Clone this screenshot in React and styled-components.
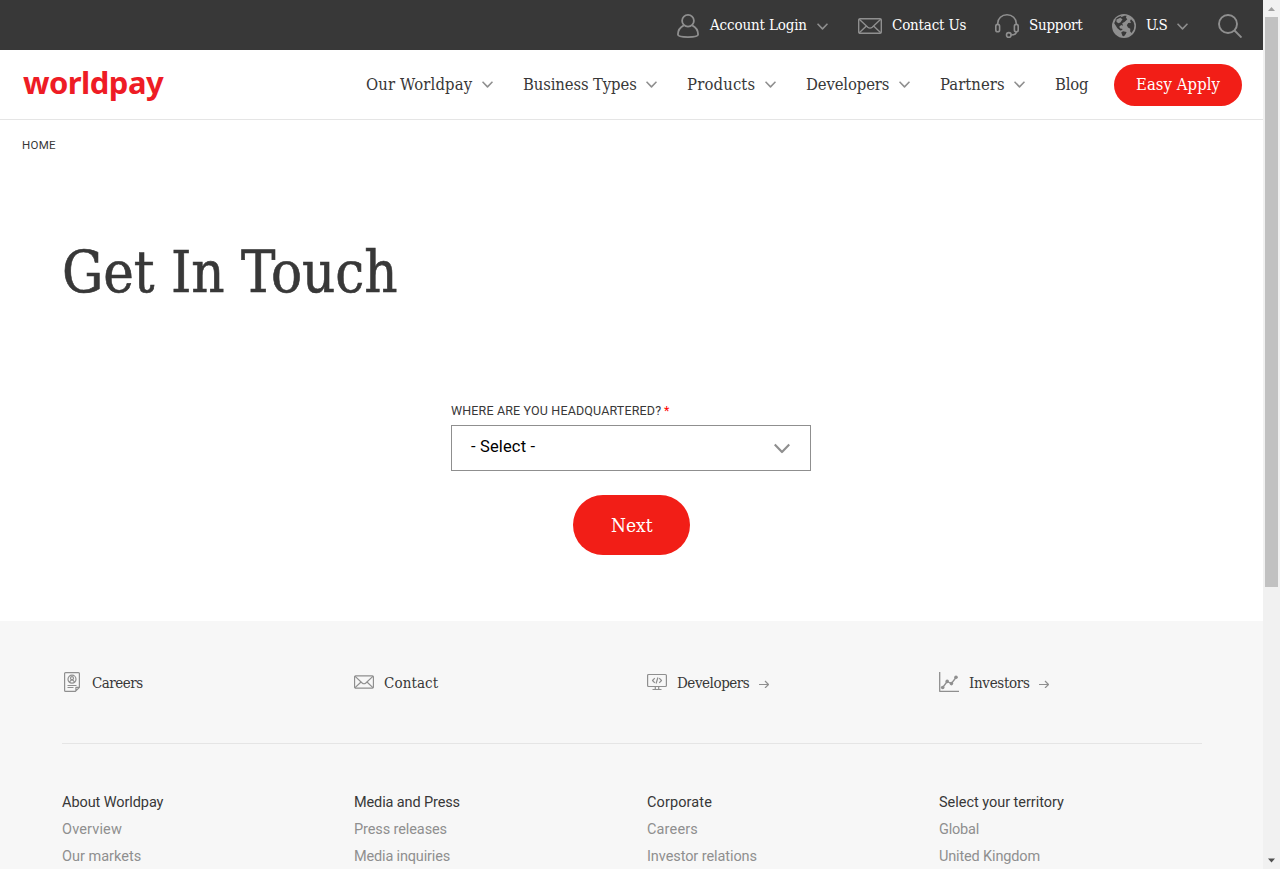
import React from "react";
import styled, { createGlobalStyle } from "styled-components";

const serif = '"DejaVu Serif Condensed", "DejaVu Serif", serif';
const sans = 'Roboto, "Liberation Sans", sans-serif';

const GlobalStyle = createGlobalStyle`
  * { box-sizing: border-box; }
  body { margin: 0; background: #fff; overflow: hidden; }
`;

const Page = styled.div`
  display: grid;
  grid-template-columns: minmax(0, 1fr) 17px;
  width: 100%;
  height: 869px;
  overflow: hidden;
`;
const Content = styled.div`
  height: 869px;
  overflow: hidden;
  color: #383838;
  font-family: ${sans};
`;
const Label = styled.span`
  display: block;
  flex: none;
  width: ${(p) => p.$w}px;
  letter-spacing: ${(p) => p.$ls || 0}px;
  white-space: nowrap;
`;
const Icon = styled.svg`
  display: block;
  flex: none;
  fill: none;
  stroke: #8f8f8f;
  stroke-linejoin: round;
`;
const TopBar = styled.div`
  display: flex;
  justify-content: flex-end;
  gap: 29px;
  height: 50px;
  padding-right: 21px;
  background: #383838;
  color: #fff;
  font: 15px/50px ${serif};
`;
const TopItem = styled.div`
  display: flex;
  align-items: center;
  gap: 10px;
  height: 52px;
  margin-left: ${(p) => p.$ml || 0}px;
  ${Label} { margin-top: -3px; }
`;
const Header = styled.header`
  display: flex;
  align-items: center;
  height: 70px;
  padding: 0 21px 0 23px;
  border-bottom: 1px solid #e5e5e5;
`;
const Logo = styled.div`
  margin-right: auto;
  margin-top: -6px;
  color: #ee1c25;
  font: 700 31px/40px "Noto Sans", sans-serif;
`;
const Nav = styled.nav`
  display: flex;
  gap: 30px;
  font: 16.5px/30px ${serif};
`;
const NavItem = styled.div`
  display: flex;
  align-items: center;
  gap: 10px;
`;
const Pill = styled.button`
  display: flex;
  align-items: center;
  justify-content: center;
  width: ${(p) => p.$w}px;
  height: ${(p) => p.$h}px;
  margin: ${(p) => p.$m};
  padding: 0;
  border: 0;
  border-radius: ${(p) => p.$h / 2}px;
  background: #f21e17;
  color: #fff;
  font: ${(p) => p.$size}px/30px ${serif};
  text-align: left;
`;
const Breadcrumb = styled.div`
  padding: 15px 0 0 22px;
  height: 45px;
  font-size: 11.5px;
  line-height: 20px;
`;
const Title = styled.h1`
  margin: 0;
  padding: 66px 0 0 62px;
  height: 238px;
  font: 400 57.5px/84px ${serif};
  -webkit-text-stroke: 0.6px #383838;
`;
const Form = styled.form`
  width: 360px;
  height: 218px;
  margin-left: 451px;
`;
const Question = styled.label`
  display: flex;
  gap: 3px;
  height: 22px;
  font-size: 12.5px;
  line-height: 16px;
`;
const Required = styled.span`
  color: #f00;
`;
const Select = styled.div`
  display: flex;
  align-items: center;
  justify-content: space-between;
  height: 46px;
  padding: 0 20px 0 19px;
  border: 1px solid #8f8f8f;
  color: #000;
  font-size: 16.5px;
  line-height: 20px;
  ${Label} { margin-top: -2px; }
`;
const Footer = styled.footer`
  height: 248px;
  padding: 0 61px 0 62px;
  background: #f7f7f7;
`;
const Columns = styled.div`
  display: grid;
  grid-template-columns: 262px 263px 262px 262px;
  gap: 30px;
`;
const Shortcuts = styled(Columns)`
  height: 123px;
  padding-top: 46px;
  border-bottom: 1px solid #e5e5e5;
  font: 15px/30px ${serif};
`;
const Shortcut = styled.div`
  display: flex;
  align-items: center;
  gap: 10px;
  height: 30px;
  ${Label} { margin-top: 2px; }
`;
const Links = styled(Columns)`
  padding-top: 45px;
  font-size: 14.5px;
  line-height: 27px;
`;
const LinkRow = styled.div`
  color: ${(p) => (p.$heading ? "#383838" : "#8f8f8f")};
`;
const Scrollbar = styled.div`
  display: flex;
  flex-direction: column;
  align-items: center;
  height: 869px;
  background: #f1f1f1;
`;
const Thumb = styled.div`
  width: 13px;
  height: 570px;
  margin-bottom: auto;
  background: #c1c1c1;
`;

const Chevron = ({ w = 11, h = 7, sw = 1.6 }) => (
  <Icon width={w} height={h} viewBox="0 0 11 7" strokeWidth={sw} strokeLinejoin="miter">
    <path d="M.5 .7 5.5 5.9 10.5 .7" />
  </Icon>
);
const UserIcon = () => (
  <Icon width="23" height="24" viewBox="0 0 23 24" strokeWidth="1.8">
    <circle cx="11" cy="6.8" r="5.9" />
    <path d="M6.8 11.4C3 13.4 .9 17 .9 20.6 .9 22.5 5 23.1 11 23.1S21.1 22.5 21.1 20.6C21.1 17 19 13.4 15.2 11.4" />
  </Icon>
);
const MailIcon = ({ w = 24, h = 16 }) => (
  <Icon width={w} height={h} viewBox="0 0 24 16" strokeWidth="1.4">
    <rect x=".7" y=".7" width="22.6" height="14.6" rx="1.4" />
    <path d="M1 1 9.8 9.2Q12 11 14.2 9.2L23 1M1 15 8.4 8M23 15 15.6 8" />
  </Icon>
);
const HeadsetIcon = () => (
  <Icon width="24" height="24" viewBox="0 0 24 24" strokeWidth="1.6">
    <path d="M2.7 10.5V9.5C2.7 4.5 6.7.8 12 .8s9.3 3.7 9.3 8.7v1M21.3 17.5c0 2.3-1.3 3.5-5.2 3.5" />
    <rect x=".8" y="10.4" width="3.8" height="7.4" rx="1.9" />
    <rect x="19.4" y="10.4" width="3.8" height="7.4" rx="1.9" />
    <circle cx="13.8" cy="20.9" r="2.3" />
  </Icon>
);
const GlobeIcon = () => (
  <Icon width="24" height="24" viewBox="0 0 24 24" strokeWidth="0">
    <circle cx="12" cy="12" r="12" fill="#8f8f8f" />
    <path
      fill="#383838"
      d="M12.5 1.7 14.5 1.8 14 3.8 15.3 5.2 12.8 7.7 10.2 9.2 11 11.8 9.2 11 7.2 12.7 8.2 14.6 10.8 15 9.2 16.6 8.2 16.5 5.4 14.2 2.6 9.8 2.2 9.2 3.6 6.2 3.8 4.800 6.200 3 9.600 1.800 8.400 3.400Z M14.600 18 13.800 20 12 22.300 10.600 22 9.200 18.400 11 17.300Z M19 5.2 21.6 8 22.4 11.5 21.8 15.5 19.5 19 18.2 17.5 18.3 14.8 16 13.6 14.8 11.3 16.2 9 19.2 8.8 18 7Z"
    />
    <path fill="#8f8f8f" d="M4.500 5.500 8.200 3.800 10.500 5.200 8.600 8.300 6.600 9.200 4.500 8Z" />
  </Icon>
);
const SearchIcon = () => (
  <Icon width="24" height="24" viewBox="0 0 24 24" strokeWidth="1.9">
    <circle cx="10" cy="10" r="9" />
    <path d="m16.5 16.5 7 7" />
  </Icon>
);
const CareersIcon = () => (
  <Icon width="20" height="20" viewBox="0 0 20 20" strokeWidth="1.2">
    <path d="M17.4 15.5V1.6q0-1-1-1H3.6q-1 0-1 1v16.8q0 1 1 1h9.8l4-4h-3.5v3.7M5.5 13.5h9M5.5 15.5h6" />
    <circle cx="10" cy="7.2" r="4" />
    <circle cx="10" cy="6.2" r="1.5" />
    <path d="M7.5 10q2.5-4 5 0" />
  </Icon>
);
const MonitorIcon = () => (
  <Icon width="20" height="20" viewBox="0 0 20 20" strokeWidth="1.2">
    <rect x=".6" y="2.5" width="18.8" height="12" rx="1" />
    <path d="M8.3 14.5v3M11.7 14.5v3M5.5 17.5h9M7.8 6.2 5.5 8.5l2.3 2.3M12.2 6.2l2.3 2.3-2.3 2.3M10.9 5.5 9.1 11.5" />
  </Icon>
);
const ChartIcon = () => (
  <Icon width="20" height="20" viewBox="0 0 20 20" strokeWidth="1.3">
    <path d="M.7 0v19.3H20M3.7 15.5 8.2 9.5l4.2 2L17 5.5" />
    <g fill="#8f8f8f" strokeWidth="0">
      <circle cx="3.7" cy="15.5" r="1.8" />
      <circle cx="8.2" cy="9.4" r="1.8" />
      <circle cx="12.4" cy="11.6" r="1.8" />
      <circle cx="17" cy="5.3" r="1.8" />
    </g>
  </Icon>
);
const Arrow = () => (
  <Icon width="10" height="12" viewBox="0 -4 10 12" strokeWidth="1.2">
    <path d="M0 4.5h9.4M6 1 9.5 4.5 6 8" />
  </Icon>
);
const Triangle = ({ up }) => (
  <Icon width="17" height="17" viewBox="0 0 17 17" strokeWidth="0">
    <path d={up ? "M8.5 7 12 11H5Z" : "M5 6.5h7L8.5 10.5Z"} fill={up ? "#a0a0a0" : "#505050"} />
  </Icon>
);

const navItems = [
  ["Our Worldpay", 106, 0.12],
  ["Business Types", 113, -0.12],
  ["Products", 68, 0.16],
  ["Developers", 83, -0.12],
  ["Partners", 64, 0.05],
];
const shortcuts = [
  ["Careers", 52, -0.5, CareersIcon],
  ["Contact", 55, 0.1, MailIcon],
  ["Developers", 72, -0.45, MonitorIcon, true],
  ["Investors", 60, -0.33, ChartIcon, true],
];
const links = [
  [["About Worldpay", -0.08], ["Overview", 0.15], ["Our markets", 0]],
  [["Media and Press", -0.12], ["Press releases", -0.1], ["Media inquiries", -0.16]],
  [["Corporate", 0.11], ["Careers", 0.15], ["Investor relations", -0.08]],
  [["Select your territory", -0.03], ["Global", -0.2], ["United Kingdom", -0.15]],
];

export default function App() {
  return (
    <Page>
      <GlobalStyle />
      <Content>
        <TopBar>
          <TopItem><UserIcon /><Label $w={97} $ls={-0.15}>Account Login</Label><Chevron /></TopItem>
          <TopItem $ml={1}><MailIcon /><Label $w={74} $ls={-0.18}>Contact Us</Label></TopItem>
          <TopItem><HeadsetIcon /><Label $w={54} $ls={-0.25}>Support</Label></TopItem>
          <TopItem><GlobeIcon /><Label $w={21} $ls={-0.9}>U.S</Label><Chevron /></TopItem>
          <TopItem $ml={1}><SearchIcon /></TopItem>
        </TopBar>
        <Header>
          <Logo><Label $w={142} $ls={-0.55}>worldpay</Label></Logo>
          <Nav>
            {navItems.map(([name, w, ls]) => (
              <NavItem key={name}><Label $w={w} $ls={ls}>{name}</Label><Chevron /></NavItem>
            ))}
            <NavItem><Label $w={33} $ls={-0.2}>Blog</Label></NavItem>
          </Nav>
          <Pill $w={128} $h={42} $size={16.5} $m="0 0 0 26px"><Label $w={84} $ls={0.08}>Easy Apply</Label></Pill>
        </Header>
        <Breadcrumb><Label $w={34} $ls={0.3}>HOME</Label></Breadcrumb>
        <Title><Label $w={336} $ls={-0.05}>Get In Touch</Label></Title>
        <Form>
          <Question><Label $w={210} $ls={0.15}>WHERE ARE YOU HEADQUARTERED?</Label><Required>*</Required></Question>
          <Select><Label $w={66} $ls={0.15}>- Select -</Label><Chevron w={16} h={11} sw={1.5} /></Select>
          <Pill type="button" $w={117} $h={60} $size={19} $m="24px 0 0 122px"><Label $w={41}>Next</Label></Pill>
        </Form>
        <Footer>
          <Shortcuts>
            {shortcuts.map(([name, w, ls, Glyph, arrow]) => (
              <Shortcut key={name}><Glyph w={20} h={14} /><Label $w={w} $ls={ls}>{name}</Label>{arrow && <Arrow />}</Shortcut>
            ))}
          </Shortcuts>
          <Links>
            {links.map((column) => (
              <div key={column[0][0]}>
                {column.map(([name, ls], i) => (
                  <LinkRow $heading={i === 0} key={name}><Label $w={200} $ls={ls}>{name}</Label></LinkRow>
                ))}
              </div>
            ))}
          </Links>
        </Footer>
      </Content>
      <Scrollbar><Triangle up /><Thumb /><Triangle /></Scrollbar>
    </Page>
  );
}
